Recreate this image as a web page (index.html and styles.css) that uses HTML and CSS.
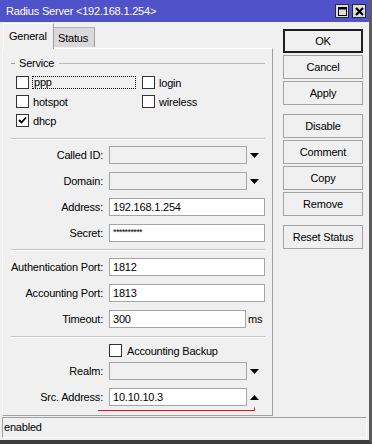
FILE: index.html
```html
<!DOCTYPE html>
<html>
<head>
<meta charset="utf-8">
<title>Radius Server</title>
<link rel="stylesheet" href="styles.css">
</head>
<body>
<div class="window">
  <div class="titlebar">
    <span class="title">Radius Server &lt;192.168.1.254&gt;</span>
    <div class="tbtns">
      <span class="tbtn"><svg width="11" height="11" viewBox="0 0 11 11"><rect x="1.5" y="1.5" width="8" height="8" fill="none" stroke="#000"/><line x1="1" y1="2.5" x2="10" y2="2.5" stroke="#000" stroke-width="2"/></svg></span>
      <span class="tbtn"><svg width="11" height="11" viewBox="0 0 11 11"><path d="M2 2 L9 9 M9 2 L2 9" stroke="#000" stroke-width="2.2"/></svg></span>
    </div>
  </div>
  <div class="main">
    <div class="left">
      <div class="tabs">
        <div class="tab active">General</div>
        <div class="tab">Status</div>
      </div>
      <div class="panel">
        <div class="group-head"><span class="dash"></span><span>Service</span><span class="gline"></span></div>
        <div class="checks">
          <div class="chk"><span class="box"></span><span class="focus">ppp</span></div>
          <div class="chk"><span class="box"></span><span class="ctext">login</span></div>
          <div class="chk"><span class="box"></span><span class="ctext">hotspot</span></div>
          <div class="chk"><span class="box"></span><span class="ctext">wireless</span></div>
          <div class="chk"><span class="box checked"><svg width="11" height="11" viewBox="0 0 11 11"><path d="M2 5 L4.5 7.5 L9 2.5" fill="none" stroke="#000" stroke-width="1.8"/></svg></span><span class="ctext">dhcp</span></div>
        </div>
        <div class="sep"></div>
        <div class="form f1">
          <div class="frow"><span class="lbl">Called ID:</span><div class="combo"><span class="inp dis"></span><svg class="arrow" width="9" height="5" viewBox="0 0 9 5"><polygon points="0,0 9,0 4.5,5" fill="#000"/></svg></div></div>
          <div class="frow"><span class="lbl">Domain:</span><div class="combo"><span class="inp dis"></span><svg class="arrow" width="9" height="5" viewBox="0 0 9 5"><polygon points="0,0 9,0 4.5,5" fill="#000"/></svg></div></div>
          <div class="frow"><span class="lbl">Address:</span><span class="inp">192.168.1.254</span></div>
          <div class="frow"><span class="lbl">Secret:</span><span class="inp secret">**********</span></div>
        </div>
        <div class="sep s2"></div>
        <div class="form f2">
          <div class="frow"><span class="lbl">Authentication Port:</span><span class="inp">1812</span></div>
          <div class="frow"><span class="lbl">Accounting Port:</span><span class="inp">1813</span></div>
          <div class="frow"><span class="lbl">Timeout:</span><div class="combo"><span class="inp short">300</span><span class="unit">ms</span></div></div>
        </div>
        <div class="sep s3"></div>
        <div class="acct"><span class="box"></span><span class="ctext">Accounting Backup</span></div>
        <div class="form f3">
          <div class="frow"><span class="lbl">Realm:</span><div class="combo"><span class="inp dis"></span><svg class="arrow" width="9" height="5" viewBox="0 0 9 5"><polygon points="0,0 9,0 4.5,5" fill="#000"/></svg></div></div>
          <div class="frow src"><span class="lbl">Src. Address:</span><div class="combo"><span class="inp">10.10.10.3</span><svg class="arrow" width="9" height="5" viewBox="0 0 9 5"><polygon points="0,5 9,5 4.5,0" fill="#000"/></svg></div>
            <svg class="redline" width="158" height="4" viewBox="0 0 158 4"><path d="M0 3.5 H156.5 V0.5" fill="none" stroke="#e8101c" stroke-width="1"/></svg>
          </div>
        </div>
      </div>
    </div>
    <div class="btns">
      <div class="btn default">OK</div>
      <div class="btn">Cancel</div>
      <div class="btn">Apply</div>
      <div class="btn grp">Disable</div>
      <div class="btn">Comment</div>
      <div class="btn">Copy</div>
      <div class="btn">Remove</div>
      <div class="btn grp">Reset Status</div>
    </div>
  </div>
  <div class="statusbar"><div class="status-box">enabled</div></div>
</div>
</body>
</html>
```

FILE: styles.css
```css
* { box-sizing: border-box; }
html, body { margin: 0; padding: 0; }
body {
  width: 372px;
  height: 444px;
  overflow: hidden;
  background: #f0f0f0;
  font-family: "Liberation Sans", Arial, sans-serif;
  font-size: 11px;
  letter-spacing: -0.2px;
  color: #000;
}
.window {
  width: 372px;
  height: 444px;
  display: flex;
  flex-direction: column;
  background: #f0f0f0;
  border-right: 3px solid #5c5c5c;
  border-bottom: 4px solid #3c3c3c;
}
.titlebar {
  flex: none;
  height: 22px;
  background: #4f52c9;
  display: flex;
  align-items: center;
  padding: 0 3px 0 6px;
}
.title { flex: 1; color: #fff; }
.tbtns { display: flex; gap: 3px; }
.tbtn {
  width: 14px;
  height: 14px;
  background: #dcdcdc;
  border: 1px solid #2a2a2a;
  display: flex;
  align-items: center;
  justify-content: center;
}
.tbtn svg { display: block; }

.main { flex: none; height: 394px; display: flex; }
.left { width: 271px; margin-left: 2px; display: flex; flex-direction: column; }
.tabs { height: 26px; padding-top: 1px; display: flex; align-items: flex-end; flex: none; }
.tab {
  height: 20px;
  width: 41px;
  background: #d9d9d9;
  border-top: 1px solid #b4b4b4;
  border-right: 1px solid #a0a0a0;
  display: flex;
  align-items: center;
  padding-left: 4px;
  margin-bottom: 1px;
}
.tab.active {
  width: 51px;
  height: 26px;
  margin-left: 1px;
  margin-bottom: -1px;
  background: #f0f0f0;
  border-top: 1px solid #fff;
  border-left: 1px solid #fff;
  border-right: 1px solid #a0a0a0;
  padding-left: 5px;
  padding-bottom: 2px;
  position: relative;
  z-index: 1;
}
.panel {
  height: 368px;
  border-top: 1px solid #fff;
  border-left: 1px solid #fff;
  border-right: 1px solid #a0a0a0;
  border-bottom: 1px solid #a0a0a0;
  padding-right: 7px;
  display: flex;
  flex-direction: column;
}
.group-head {
  margin-top: 7px;
  height: 14px;
  padding-left: 8px;
  display: flex;
  align-items: center;
  gap: 4px;
}
.dash { width: 4px; height: 1px; background: #9a9a9a; }
.gline { flex: 1; height: 1px; background: #b9b9b9; margin-left: 1px; }
.checks {
  margin-top: 3px;
  padding-left: 13px;
  display: grid;
  grid-template-columns: 126px 1fr;
  grid-auto-rows: 19px;
}
.chk { display: flex; align-items: center; }
.box {
  width: 13px;
  height: 13px;
  flex: none;
  background: #fff;
  border: 1px solid #333;
  display: flex;
  align-items: center;
  justify-content: center;
}
.box svg { display: block; }
.ctext { margin-left: 4px; }
.focus {
  margin-left: 3px;
  width: 104px;
  height: 13px;
  line-height: 11px;
  padding-left: 1px;
  border: 1px dotted #000;
}
.sep {
  margin: 8px 0 0 8px;
  height: 2px;
  border-top: 1px solid #c4c4c4;
  border-bottom: 1px solid #fff;
  flex: none;
}
.sep.s2 { margin-top: 7px; }
.sep.s3 { margin-top: 8px; }
.form { display: flex; flex-direction: column; gap: 8px; }
.f1 { margin-top: 6px; }
.f2 { margin-top: 7px; }
.f3 { margin-top: 5px; }
.frow {
  display: grid;
  grid-template-columns: 100px 1fr;
  column-gap: 6px;
  align-items: center;
  height: 18px;
}
.lbl { text-align: right; white-space: nowrap; }
.inp {
  display: block;
  height: 18px;
  line-height: 16px;
  border: 1px solid #a5a5a5;
  background: #fff;
  padding-left: 3px;
  white-space: nowrap;
}
.inp.dis { background: #f0f0f0; width: 138px; }
.combo { display: flex; align-items: center; }
.combo .inp { width: 138px; }
.combo .inp.short { width: 137px; }
.arrow { margin-left: 3px; display: block; }
.unit { margin-left: 2px; }
.secret { font-size: 9px; letter-spacing: -0.6px; line-height: 14px; }
.acct {
  margin-top: 6px;
  padding-left: 106px;
  height: 13px;
  display: flex;
  align-items: center;
}
.acct .ctext { margin-left: 5px; }
.src { position: relative; }
.redline { position: absolute; left: 95px; top: 19px; display: block; }

.btns {
  width: 80px;
  margin-left: 10px;
  padding-top: 7px;
  display: flex;
  flex-direction: column;
  gap: 2px;
}
.btn {
  height: 24px;
  border: 1px solid #a3a3a3;
  background: #f0f0f0;
  display: flex;
  align-items: center;
  justify-content: center;
}
.btn.default { border: 2px solid #1e1e1e; }
.btn.grp { margin-top: 7px; }

.statusbar { flex: none; height: 24px; padding: 1px 2px 0 2px; }
.status-box {
  height: 21px;
  border-top: 1px solid #a0a0a0;
  border-left: 1px solid #a0a0a0;
  border-bottom: 1px solid #fff;
  border-right: 1px solid #fff;
  padding-left: 1px;
  line-height: 19px;
}
```
